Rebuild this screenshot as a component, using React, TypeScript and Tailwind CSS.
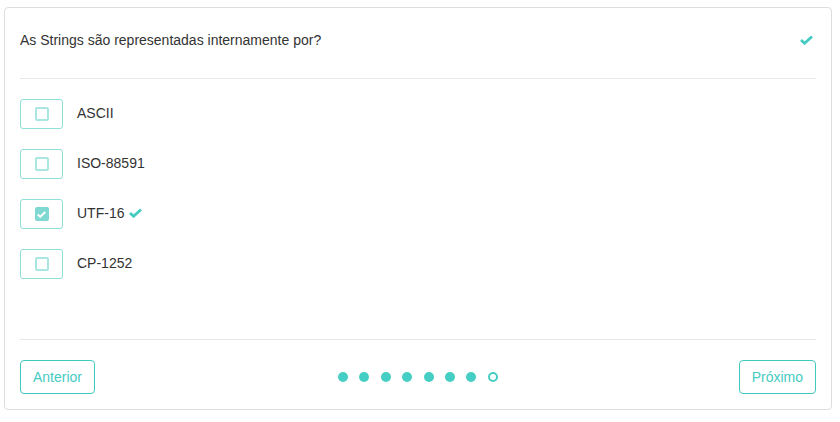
import { useState } from "react";

const options = ["ASCII", "ISO-88591", "UTF-16", "CP-1252"];

function Check({ className }: { className?: string }) {
  return (
    <svg viewBox="0 0 13 10" className={className} aria-hidden>
      <path d="M1 5 L4.6 8.3 L12 1.5" fill="none" stroke="currentColor" strokeWidth="2.8" strokeLinejoin="miter" />
    </svg>
  );
}

export default function App() {
  const [selected] = useState(2);
  const total = 8;
  const current = 7;

  return (
    <div className="min-h-[422px] bg-white pl-[4px] pt-[7px] font-['Liberation_Sans',Arial,sans-serif] text-[14px] text-[#333]">
      <div className="flex h-[403px] w-[828px] flex-col rounded-[4px] border border-[#dddddd] px-[15px]">
        <div className="flex items-center justify-between border-b border-[#e8e8e8] pb-[28px] pt-[22px] leading-[20px]">
          <span>As Strings são representadas internamente por?</span>
          <Check className="mr-[3px] h-[10px] w-[13px] text-[#45cbc2]" />
        </div>

        <div className="flex flex-1 flex-col gap-[20px] border-b border-[#e8e8e8] pt-[20px]">
          {options.map((opt, i) => (
            <div key={opt} className="flex h-[30px] items-center gap-[14px]">
              <div className="flex h-[30px] w-[43px] items-center justify-center rounded-[3px] border border-[#8fded8]">
                {i === selected ? (
                  <span className="flex h-[14px] w-[14px] items-center justify-center rounded-[2px] bg-[#7fd9d2]">
                    <Check className="h-[7px] w-[9px] text-white" />
                  </span>
                ) : (
                  <span className="h-[14px] w-[14px] rounded-[2px] border-2 border-[#a9e6e1]" />
                )}
              </div>
              <span className="-mt-[2px] flex items-center gap-[5px] leading-[20px]">
                {opt}
                {i === selected && <Check className="h-[10px] w-[13px] text-[#45cbc2]" />}
              </span>
            </div>
          ))}
        </div>

        <div className="flex items-center justify-between pb-[15px] pt-[20px]">
          <button className="h-[34px] rounded-[4px] border border-[#3fc9bf] px-[12px] text-[#45cbc2]">
            Anterior
          </button>
          <div className="ml-[2px] flex items-center gap-[11.43px]">
            {Array.from({ length: total }).map((_, i) => (
              <span
                key={i}
                className={
                  i < current
                    ? "h-[10px] w-[10px] rounded-full bg-[#45cfc4]"
                    : "h-[10px] w-[10px] rounded-full border-2 border-[#45cfc4]"
                }
              />
            ))}
          </div>
          <button className="h-[34px] rounded-[4px] border border-[#3fc9bf] px-[12px] text-[#45cbc2]">
            Próximo
          </button>
        </div>
      </div>
    </div>
  );
}
